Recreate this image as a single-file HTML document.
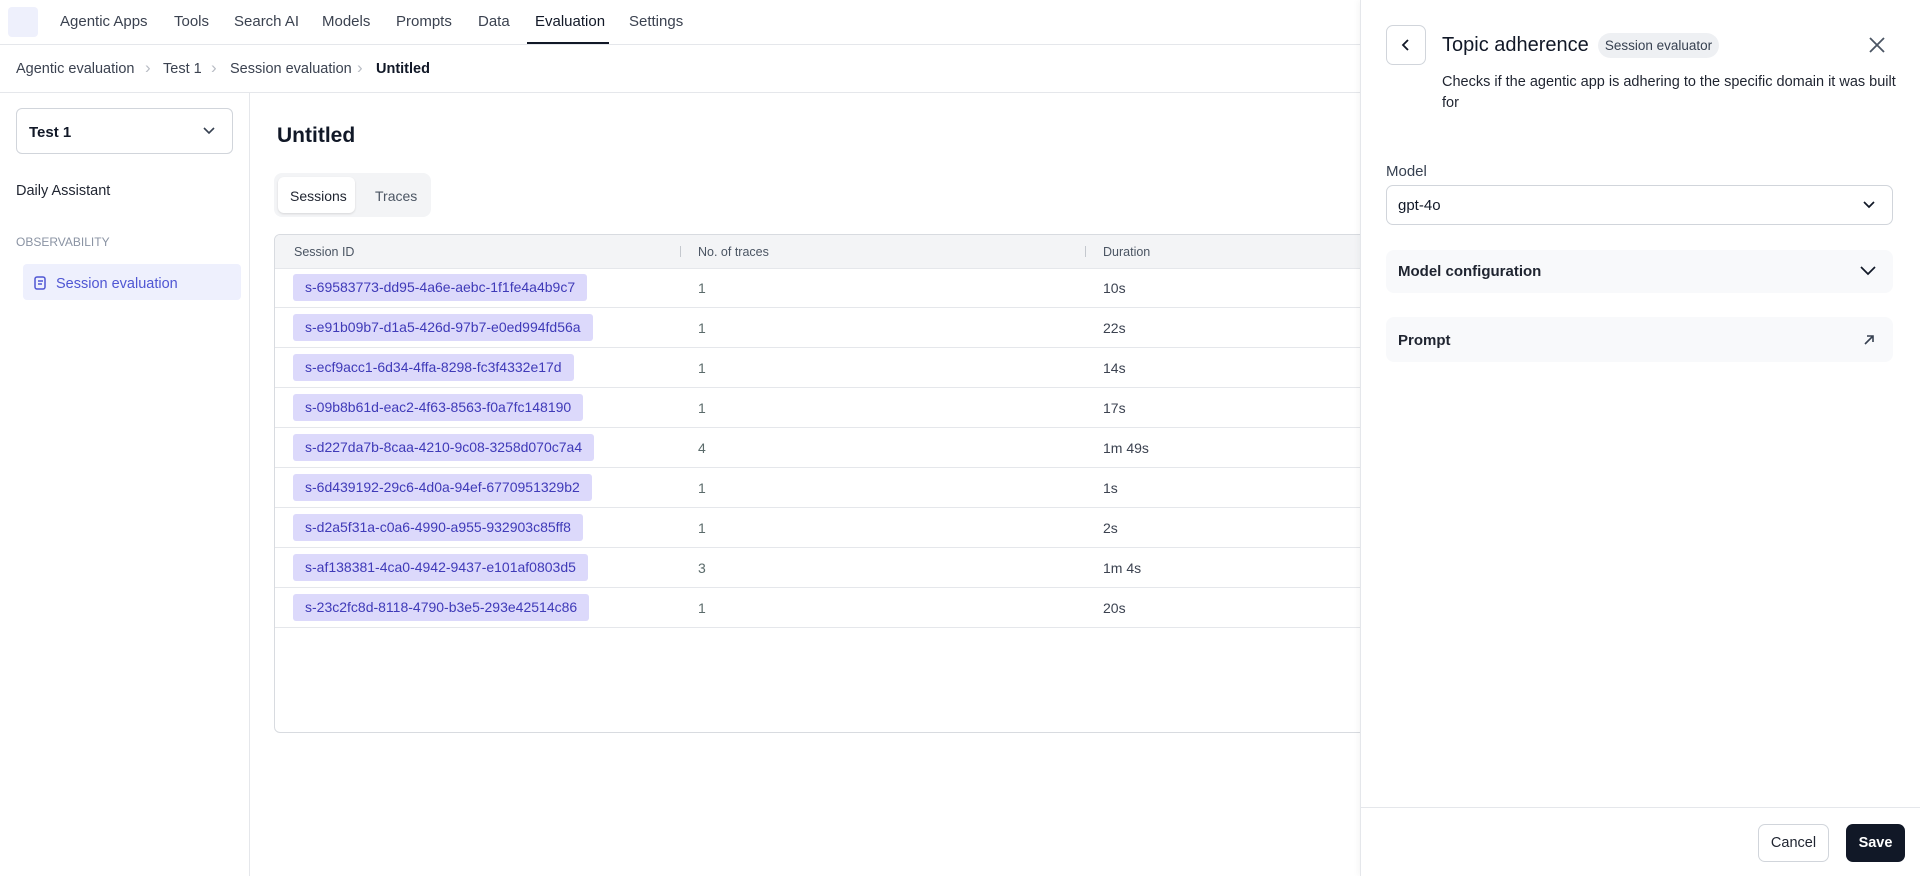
<!DOCTYPE html>
<html><head><meta charset="utf-8"><style>
*{box-sizing:border-box;margin:0;padding:0}
body{width:1920px;height:876px;overflow:hidden;background:#fff;font-family:"Liberation Sans",sans-serif;color:#1f2430;position:relative}
.abs{position:absolute}
.nav{left:0;top:0;width:1920px;height:45px;border-bottom:1px solid #e5e7eb}
.nav span{position:absolute;top:13px;font-size:15px;color:#3b4250}
.crumb{top:61px;font-size:14.5px;color:#3b4250}
.chev{top:58px;font-size:17px;color:#b8bcc4}
.row{position:absolute;left:275px;width:1100px;height:40px;border-bottom:1px solid #e5e7eb}
.chip{position:absolute;left:18px;top:6px;height:27px;line-height:27px;padding:0 12px;background:#dcd9fb;color:#3f3ab8;font-size:14px;border-radius:3px}
.c2{position:absolute;left:423px;top:12px;font-size:14px;color:#5b6b6b}
.c3{position:absolute;left:828px;top:12px;font-size:14px;color:#3b4250}
</style></head><body>
<div class="abs nav">
<div class="abs" style="left:8px;top:7px;width:30px;height:30px;background:#eef0fc;border-radius:4px"></div>
<span style="left:60px">Agentic Apps</span>
<span style="left:174px">Tools</span>
<span style="left:234px">Search AI</span>
<span style="left:322px">Models</span>
<span style="left:396px">Prompts</span>
<span style="left:478px">Data</span>
<span style="left:535px;color:#111827">Evaluation</span>
<span style="left:629px">Settings</span>
<div class="abs" style="left:527px;top:42px;width:82px;height:2px;background:#111827"></div>
</div>
<span class="abs crumb" style="left:16px">Agentic evaluation</span>
<span class="abs chev" style="left:145px">›</span>
<span class="abs crumb" style="left:163px">Test 1</span>
<span class="abs chev" style="left:211px">›</span>
<span class="abs crumb" style="left:230px">Session evaluation</span>
<span class="abs chev" style="left:357px">›</span>
<span class="abs crumb" style="left:376px;color:#111827;font-weight:bold">Untitled</span>
<div class="abs" style="left:0;top:92px;width:1920px;border-top:1px solid #e5e7eb"></div>
<div class="abs" style="left:249px;top:92px;height:784px;border-left:1px solid #e5e7eb"></div>
<div class="abs" style="left:16px;top:108px;width:217px;height:46px;border:1px solid #d1d5db;border-radius:6px"></div>
<span class="abs" style="left:29px;top:124px;font-size:15px;font-weight:bold;color:#111827">Test 1</span>
<svg class="abs" style="left:202px;top:126px" width="14" height="10" viewBox="0 0 14 10"><path d="M2 2l5 5 5-5" fill="none" stroke="#374151" stroke-width="1.6"/></svg>
<span class="abs" style="left:16px;top:183px;font-size:14.5px;color:#1f2430">Daily Assistant</span>
<span class="abs" style="left:16px;top:235px;font-size:12px;color:#8a93a3">OBSERVABILITY</span>
<div class="abs" style="left:23px;top:264px;width:218px;height:36px;background:#eef0fd;border-radius:4px"></div>
<svg class="abs" style="left:34px;top:276px" width="13" height="15" viewBox="0 0 13 15"><rect x="1" y="1" width="10" height="12" rx="2" fill="none" stroke="#4f56d3" stroke-width="1.5"/><path d="M4 5h5M4 8h4" stroke="#4f56d3" stroke-width="1.4"/></svg>
<span class="abs" style="left:56px;top:276px;font-size:14.5px;color:#4f56d3">Session evaluation</span>
<span class="abs" style="left:277px;top:124px;font-size:21px;font-weight:bold;color:#111827">Untitled</span>
<div class="abs" style="left:274px;top:173px;width:157px;height:44px;background:#f3f4f6;border-radius:8px"></div>
<div class="abs" style="left:278px;top:177px;width:77px;height:36px;background:#fff;border-radius:6px;box-shadow:0 1px 2px rgba(0,0,0,.12)"></div>
<span class="abs" style="left:290px;top:188px;font-size:14px;color:#1f2430">Sessions</span>
<span class="abs" style="left:375px;top:188px;font-size:14px;color:#4b5563">Traces</span>
<div class="abs" style="left:274px;top:234px;width:1120px;height:499px;border:1px solid #d8dbe0;border-radius:6px;overflow:hidden">
<div class="abs" style="left:0;top:0;width:1120px;height:34px;background:#f3f4f6;border-bottom:1px solid #e5e7eb"></div>
<span class="abs" style="left:19px;top:10px;font-size:12.5px;color:#4b5563">Session ID</span>
<span class="abs" style="left:423px;top:10px;font-size:12.5px;color:#4b5563">No. of traces</span>
<span class="abs" style="left:828px;top:10px;font-size:12.5px;color:#4b5563">Duration</span>
<div class="abs" style="left:405px;top:11px;height:11px;border-left:1px solid #c4c8ce"></div>
<div class="abs" style="left:810px;top:11px;height:11px;border-left:1px solid #c4c8ce"></div>
</div>
<div class="row" style="top:268px"><span class="chip">s-69583773-dd95-4a6e-aebc-1f1fe4a4b9c7</span><span class="c2">1</span><span class="c3">10s</span></div>
<div class="row" style="top:308px"><span class="chip">s-e91b09b7-d1a5-426d-97b7-e0ed994fd56a</span><span class="c2">1</span><span class="c3">22s</span></div>
<div class="row" style="top:348px"><span class="chip">s-ecf9acc1-6d34-4ffa-8298-fc3f4332e17d</span><span class="c2">1</span><span class="c3">14s</span></div>
<div class="row" style="top:388px"><span class="chip">s-09b8b61d-eac2-4f63-8563-f0a7fc148190</span><span class="c2">1</span><span class="c3">17s</span></div>
<div class="row" style="top:428px"><span class="chip">s-d227da7b-8caa-4210-9c08-3258d070c7a4</span><span class="c2">4</span><span class="c3">1m 49s</span></div>
<div class="row" style="top:468px"><span class="chip">s-6d439192-29c6-4d0a-94ef-6770951329b2</span><span class="c2">1</span><span class="c3">1s</span></div>
<div class="row" style="top:508px"><span class="chip">s-d2a5f31a-c0a6-4990-a955-932903c85ff8</span><span class="c2">1</span><span class="c3">2s</span></div>
<div class="row" style="top:548px"><span class="chip">s-af138381-4ca0-4942-9437-e101af0803d5</span><span class="c2">3</span><span class="c3">1m 4s</span></div>
<div class="row" style="top:588px"><span class="chip">s-23c2fc8d-8118-4790-b3e5-293e42514c86</span><span class="c2">1</span><span class="c3">20s</span></div>

<div class="abs" style="left:1360px;top:0;width:560px;height:876px;background:#fff;border-left:1px solid #e5e7eb;box-shadow:-2px 0 6px rgba(0,0,0,.04)">
<div class="abs" style="left:25px;top:25px;width:40px;height:40px;border:1px solid #d1d5db;border-radius:7px"></div>
<svg class="abs" style="left:39px;top:38px" width="12" height="14" viewBox="0 0 12 14"><path d="M8 2L3 7l5 5" fill="none" stroke="#111827" stroke-width="1.8"/></svg>
<span class="abs" style="left:81px;top:34px;font-size:20px;color:#111827">Topic adherence</span>
<span class="abs" style="left:237px;top:33px;width:121px;height:25px;line-height:25px;background:#eef0f3;border-radius:13px;font-size:13.5px;color:#374151;text-align:center">Session evaluator</span>
<svg class="abs" style="left:507px;top:36px" width="18" height="18" viewBox="0 0 18 18"><path d="M2 2l14 14M16 2L2 16" stroke="#4b5563" stroke-width="1.8"/></svg>
<div class="abs" style="left:81px;top:72px;width:460px;font-size:14.5px;line-height:21px;color:#1f2430">Checks if the agentic app is adhering to the specific domain it was built for</div>
<span class="abs" style="left:25px;top:163px;font-size:15px;color:#374151">Model</span>
<div class="abs" style="left:25px;top:185px;width:507px;height:40px;border:1px solid #d1d5db;border-radius:7px"></div>
<span class="abs" style="left:37px;top:197px;font-size:15px;color:#111827">gpt-4o</span>
<svg class="abs" style="left:501px;top:200px" width="14" height="10" viewBox="0 0 14 10"><path d="M2 2l5 5 5-5" fill="none" stroke="#111827" stroke-width="1.7"/></svg>
<div class="abs" style="left:25px;top:250px;width:507px;height:43px;background:#f8f9fb;border-radius:8px"></div>
<span class="abs" style="left:37px;top:263px;font-size:15px;font-weight:bold;color:#1f2430">Model configuration</span>
<svg class="abs" style="left:498px;top:265px" width="18" height="12" viewBox="0 0 18 12"><path d="M2 2l7 7 7-7" fill="none" stroke="#111827" stroke-width="1.7"/></svg>
<div class="abs" style="left:25px;top:317px;width:507px;height:45px;background:#f8f9fb;border-radius:8px"></div>
<span class="abs" style="left:37px;top:332px;font-size:15px;font-weight:bold;color:#1f2430">Prompt</span>
<svg class="abs" style="left:502px;top:334px" width="12" height="12" viewBox="0 0 12 12"><path d="M2 10L10 2M4 2h6v6" fill="none" stroke="#374151" stroke-width="1.6"/></svg>
<div class="abs" style="left:0;top:807px;width:560px;border-top:1px solid #e5e7eb"></div>
<div class="abs" style="left:397px;top:824px;width:71px;height:38px;border:1px solid #d1d5db;border-radius:7px;font-size:14.5px;line-height:36px;text-align:center;color:#1f2430">Cancel</div>
<div class="abs" style="left:485px;top:824px;width:59px;height:38px;background:#111827;border-radius:7px;font-size:14.5px;line-height:38px;text-align:center;color:#fff;font-weight:bold">Save</div>
</div>
</body></html>
